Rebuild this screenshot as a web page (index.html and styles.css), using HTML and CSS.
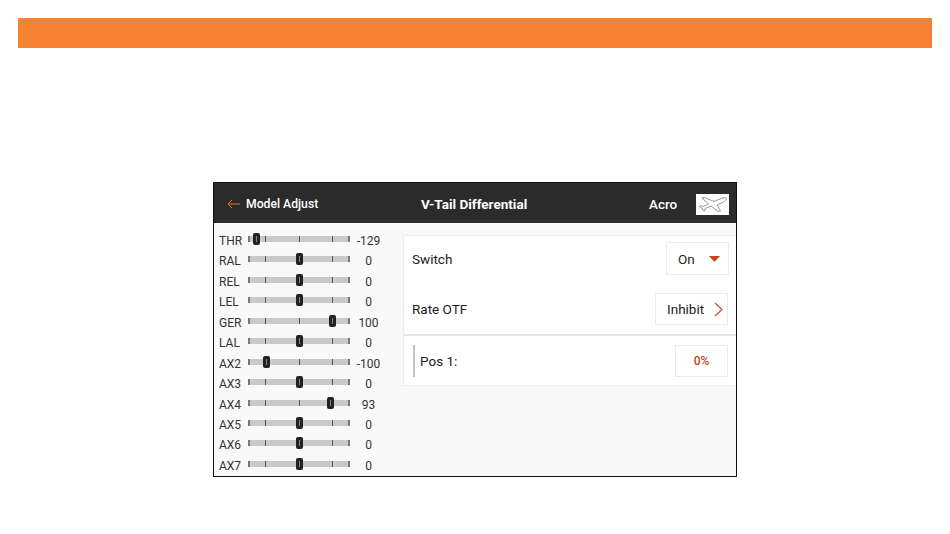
FILE: index.html
```html
<!DOCTYPE html>
<html lang="en">
<head>
<meta charset="utf-8">
<title>V-Tail Differential</title>
<link rel="stylesheet" href="styles.css">
</head>
<body>
<div class="banner"></div>
<main class="screen">
  <header class="topbar">
    <div class="back">
      <svg class="back-icon" viewBox="0 0 14 10" width="14" height="10"><path d="M5 1 1 5l4 4M1 5h12" fill="none" stroke="#e8703a" stroke-width="1"/></svg>
      <span>Model Adjust</span>
    </div>
    <div class="title">V-Tail Differential</div>
    <div class="model">Acro</div>
    <div class="plane">
      <svg viewBox="0 0 32 20" width="32" height="20"><path d="M5 4 7.500 3.500 17 7.500 24 4.500C26.500 3.500 29 3.500 29.500 4.500S28 7.500 25.500 8.500L20 11 23.500 17 21 17.500 14 12 8 14.500 8 16.500 6.500 17 5 14 2.500 12.500 4 11.500 6 12.500 11.500 10Z" fill="#fff" stroke="#8a8a8a" stroke-width="0.900" stroke-linejoin="round"/></svg>
    </div>
  </header>
  <div class="body">
    <section class="channels">
      <div class="ch"><span class="name">THR</span><div class="track"><i class="t1"></i><i class="t2"></i><i class="t3"></i><b class="thumb" style="left:7px"></b></div><span class="val">-129</span></div>
      <div class="ch"><span class="name">RAL</span><div class="track"><i class="t1"></i><i class="t2"></i><i class="t3"></i><b class="thumb" style="left:50px"></b></div><span class="val">0</span></div>
      <div class="ch"><span class="name">REL</span><div class="track"><i class="t1"></i><i class="t2"></i><i class="t3"></i><b class="thumb" style="left:50px"></b></div><span class="val">0</span></div>
      <div class="ch"><span class="name">LEL</span><div class="track"><i class="t1"></i><i class="t2"></i><i class="t3"></i><b class="thumb" style="left:50px"></b></div><span class="val">0</span></div>
      <div class="ch"><span class="name">GER</span><div class="track"><i class="t1"></i><i class="t2"></i><i class="t3"></i><b class="thumb" style="left:83px"></b></div><span class="val">100</span></div>
      <div class="ch"><span class="name">LAL</span><div class="track"><i class="t1"></i><i class="t2"></i><i class="t3"></i><b class="thumb" style="left:50px"></b></div><span class="val">0</span></div>
      <div class="ch"><span class="name">AX2</span><div class="track"><i class="t1"></i><i class="t2"></i><i class="t3"></i><b class="thumb" style="left:17px"></b></div><span class="val">-100</span></div>
      <div class="ch"><span class="name">AX3</span><div class="track"><i class="t1"></i><i class="t2"></i><i class="t3"></i><b class="thumb" style="left:50px"></b></div><span class="val">0</span></div>
      <div class="ch"><span class="name">AX4</span><div class="track"><i class="t1"></i><i class="t2"></i><i class="t3"></i><b class="thumb" style="left:81px"></b></div><span class="val">93</span></div>
      <div class="ch"><span class="name">AX5</span><div class="track"><i class="t1"></i><i class="t2"></i><i class="t3"></i><b class="thumb" style="left:50px"></b></div><span class="val">0</span></div>
      <div class="ch"><span class="name">AX6</span><div class="track"><i class="t1"></i><i class="t2"></i><i class="t3"></i><b class="thumb" style="left:50px"></b></div><span class="val">0</span></div>
      <div class="ch"><span class="name">AX7</span><div class="track"><i class="t1"></i><i class="t2"></i><i class="t3"></i><b class="thumb" style="left:50px"></b></div><span class="val">0</span></div>
    </section>
    <section class="panel">
      <div class="row row-switch">
        <span>Switch</span>
        <div class="btn btn-on">On<svg class="caret" viewBox="0 0 11 6" width="11" height="6"><path d="M0 0h11L5.500 6Z" fill="#c8431a"/></svg></div>
      </div>
      <div class="row row-rate">
        <span>Rate OTF</span>
        <div class="btn btn-inhibit">Inhibit<svg class="chev" viewBox="0 0 9 15" width="9" height="15"><path d="M1 1l7 6.500L1 14" fill="none" stroke="#c8502a" stroke-width="1.200"/></svg></div>
      </div>
      <div class="row row-pos">
        <span class="pos-label">Pos 1:</span>
        <div class="btn btn-pct">0%</div>
      </div>
    </section>
  </div>
</main>
</body>
</html>
```
FILE: styles.css
```css
* { box-sizing: border-box; }
html, body { margin: 0; padding: 0; }
body {
  width: 950px;
  height: 534px;
  background: #fff;
  font-family: Roboto, "Liberation Sans", sans-serif;
  color: #222;
  padding-top: 18px;
  overflow: hidden;
}
.banner {
  height: 30px;
  margin: 0 18px;
  background: #f58233;
}
.screen {
  width: 524px;
  height: 295px;
  margin: 134px 0 0 213px;
  border: 1px solid #111;
  background: #f9f9f9;
  display: flex;
  flex-direction: column;
}
.topbar {
  height: 40px;
  flex: none;
  background: #2b2b2b;
  color: #fff;
  display: flex;
  align-items: center;
  font-weight: 500;
  padding: 2px 0 0 13px;
}
.back {
  width: 194px;
  display: flex;
  align-items: center;
  gap: 5px;
  font-size: 12.2px;
}
.title {
  width: 228px;
  font-size: 13.5px;
  font-weight: 700;
}
.model { font-size: 13.5px; width: 47px; }
.plane {
  width: 33px;
  height: 21px;
  background: #fff;
  display: flex;
  align-items: center;
  justify-content: center;
}
.body { flex: 1; display: flex; min-height: 0; }
.channels {
  width: 188px;
  flex: none;
  padding: 6px 0 0 5px;
  display: flex;
  flex-direction: column;
}
.ch {
  height: 20.45px;
  flex: none;
  display: flex;
  align-items: flex-start;
  font-size: 12px;
  line-height: 14px;
  color: #333;
}
.name { width: 29px; padding-top: 5px; }
.track {
  position: relative;
  width: 102px;
  height: 6px;
  margin-top: 7px;
  background: #c9c9c9;
  border-left: 2px solid #777;
  border-right: 2px solid #777;
}
.track i {
  position: absolute;
  top: 0;
  width: 1px;
  height: 6px;
  background: #555;
}
.t1 { left: 15px; }
.t2 { left: 49px; }
.t3 { left: 82px; }
.thumb {
  position: absolute;
  top: -3px;
  width: 7px;
  height: 12px;
  margin-left: -4px;
  background: #222;
  border-radius: 2px;
}
.thumb::after {
  content: "";
  position: absolute;
  left: 3px;
  top: 3px;
  width: 1px;
  height: 6px;
  background: #888;
}
.val {
  width: 45px;
  padding: 5px 8px 0 0;
  text-align: center;
}
.panel {
  width: 333px;
  height: 151px;
  margin: 12px 0 0 1px;
  background: #fff;
  border: 1px solid #eee;
  border-right: 0;
  font-size: 13.500px;
  color: #222;
}
.row {
  display: flex;
  align-items: center;
  justify-content: space-between;
  padding-left: 8px;
}
.row-switch { height: 45px; padding-right: 7px; }
.row-rate { height: 55px; padding-top: 3px; padding-right: 8px; border-bottom: 2px solid #e4e4e4; }
.row-pos { height: 49px; padding-right: 8px; padding-left: 9px; }
.pos-label {
  height: 32px;
  line-height: 32px;
  border-left: 2px solid #c4c4c4;
  padding-left: 5px;
}
.btn {
  height: 33px;
  display: flex;
  align-items: center;
  background: #fff;
  border: 1px solid #eaeaea;
}
.btn-on { width: 63px; padding-left: 11px; gap: 14px; }
.btn-inhibit { width: 73px; height: 32px; padding-left: 11px; gap: 10px; }
.btn-pct {
  width: 53px;
  height: 32px;
  justify-content: center;
  font-size: 12px;
  font-weight: 500;
  color: #c8431a;
}
```
